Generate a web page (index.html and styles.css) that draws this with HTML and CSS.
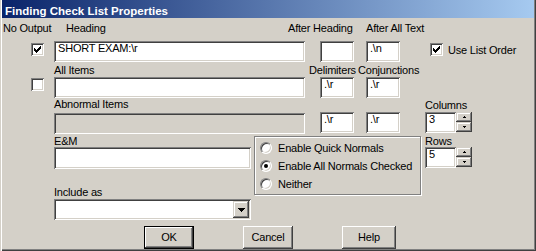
FILE: index.html
```html
<!DOCTYPE html>
<html>
<head>
<meta charset="utf-8">
<title>Finding Check List Properties</title>
<link rel="stylesheet" href="styles.css">
</head>
<body>
<div class="window">
  <div class="titlebar">Finding Check List Properties</div>

  <div class="row r-hdr">
    <span class="lbl w-nooutput">No Output</span>
    <span class="lbl w-heading">Heading</span>
    <span class="lbl w-afterhead">After Heading</span>
    <span class="lbl">After All Text</span>
  </div>

  <div class="row r-heading">
    <span class="check chk-a"><svg width="7" height="7" viewBox="0 0 7 7" shape-rendering="crispEdges"><path d="M6 0h1v1h-1z M5 1h2v1h-2z M0 2h1v1h-1z M4 2h3v1h-3z M0 3h2v1h-2z M3 3h3v1h-3z M0 4h5v1h-5z M1 5h3v1h-3z M2 6h1v1h-1z" fill="#000"/></svg></span>
    <div class="edit e-main">SHORT EXAM:\r</div>
    <div class="edit e-delim"></div>
    <div class="edit e-conj">.\n</div>
    <div class="list-order">
      <span class="check"><svg width="7" height="7" viewBox="0 0 7 7" shape-rendering="crispEdges"><path d="M6 0h1v1h-1z M5 1h2v1h-2z M0 2h1v1h-1z M4 2h3v1h-3z M0 3h2v1h-2z M3 3h3v1h-3z M0 4h5v1h-5z M1 5h3v1h-3z M2 6h1v1h-1z" fill="#000"/></svg></span>
      <span class="lbl lo-text">Use List Order</span>
    </div>
  </div>

  <div class="row r-sub">
    <span class="lbl w-allitems">All Items</span>
    <span class="lbl w-delims">Delimiters</span>
    <span class="lbl">Conjunctions</span>
  </div>

  <div class="row">
    <span class="check chk-b"></span>
    <div class="edit e-main"></div>
    <div class="edit e-delim">.\r</div>
    <div class="edit e-conj">.\r</div>
  </div>

  <div class="row r-sub2">
    <span class="lbl w-abnormal">Abnormal Items</span>
    <span class="lbl lbl-columns">Columns</span>
  </div>

  <div class="row">
    <div class="edit disabled e-abn"></div>
    <div class="edit e-delim">.\r</div>
    <div class="edit e-conj">.\r</div>
    <div class="spin spin-columns">
      <div class="edit spin-edit">3</div>
      <div class="spin-btns">
        <span class="sbtn"><svg width="3" height="2" viewBox="0 0 3 2" shape-rendering="crispEdges"><path d="M1 0h1v1h1v1h-3v-1h1z" fill="#000"/></svg></span>
        <span class="sbtn"><svg width="3" height="2" viewBox="0 0 3 2" shape-rendering="crispEdges"><path d="M0 0h3v1h-1v1h-1v-1h-1z" fill="#000"/></svg></span>
      </div>
    </div>
  </div>

  <div class="lower">
    <div class="left-col">
      <span class="lbl tight">E&amp;M</span>
      <div class="edit e-em"></div>
      <span class="lbl tight include">Include as</span>
      <div class="edit combo">
        <span class="combo-btn"><svg width="7" height="4" viewBox="0 0 7 4" shape-rendering="crispEdges"><path d="M0 0h7v1h-1v1h-1v1h-1v1h-1v-1h-1v-1h-1v-1h-1z" fill="#000"/></svg></span>
      </div>
    </div>

    <div class="radio-group">
      <div class="radio-item"><span class="radio"></span><span>Enable Quick Normals</span></div>
      <div class="radio-item"><span class="radio"><span class="dot"></span></span><span>Enable All Normals Checked</span></div>
      <div class="radio-item"><span class="radio"></span><span>Neither</span></div>
    </div>

    <div class="right-col">
      <span class="lbl tight">Rows</span>
      <div class="spin">
        <div class="edit spin-edit">5</div>
        <div class="spin-btns">
          <span class="sbtn"><svg width="3" height="2" viewBox="0 0 3 2" shape-rendering="crispEdges"><path d="M1 0h1v1h1v1h-3v-1h1z" fill="#000"/></svg></span>
          <span class="sbtn"><svg width="3" height="2" viewBox="0 0 3 2" shape-rendering="crispEdges"><path d="M0 0h3v1h-1v1h-1v-1h-1z" fill="#000"/></svg></span>
        </div>
      </div>
    </div>
  </div>

  <div class="buttons">
    <div class="btn btn-ok">OK</div>
    <div class="btn btn-cancel">Cancel</div>
    <div class="btn btn-help">Help</div>
  </div>
</div>
</body>
</html>
```
FILE: styles.css
```css
* { box-sizing: border-box; }

body {
  margin: 0;
  background: #d4d0c8;
}

.window {
  width: 536px;
  height: 251px;
  overflow: hidden;
  background: #d4d0c8;
  font-family: "Liberation Sans", Arial, sans-serif;
  font-size: 11px;
  letter-spacing: -0.2px;
  color: #000;
  box-shadow: inset 1px 0 #d4d0c8, inset 2px 0 #fff, inset -1px -1px #404040, inset -2px -2px #808080;
}

.titlebar {
  margin: 0 2px;
  height: 18px;
  padding: 5px 0 0 3px;
  background: linear-gradient(to right, #0a246a, #a6caf0);
  color: #fff;
  font-weight: bold;
  font-size: 11.5px;
  letter-spacing: 0;
  line-height: 13px;
  white-space: nowrap;
}

.row {
  display: flex;
  align-items: flex-start;
}

.lbl {
  line-height: 13px;
  white-space: nowrap;
  flex: none;
}

.tight { line-height: 12px; }

/* header labels */
.r-hdr { margin-top: 4px; padding-left: 3px; }
.w-nooutput { width: 63px; }
.w-heading { width: 222px; }
.w-afterhead { width: 78px; }

.r-heading { margin-top: 6px; }

.r-sub { margin-top: 2px; padding-left: 54px; }
.w-allitems { width: 255px; }
.w-delims { width: 49px; }

.r-sub2 { padding-left: 54px; }
.w-abnormal { width: 371px; }
.lbl-columns { margin-top: 1px; }

/* sunken edit field */
.edit {
  flex: none;
  background: #fff;
  padding: 1px 3px 0 4px;
  line-height: 13px;
  white-space: nowrap;
  overflow: hidden;
  box-shadow: inset 1px 1px #808080, inset -1px -1px #fff, inset 2px 2px #404040, inset -2px -2px #d4d0c8;
}
.edit.disabled { background: #d4d0c8; }

.e-main { margin-left: 10px; width: 251px; height: 21px; }
.e-delim { margin-left: 15px; width: 34px; height: 21px; }
.e-conj { margin-left: 12px; width: 34px; height: 21px; }
.e-abn { margin-left: 54px; margin-top: 1px; width: 251px; height: 21px; }

/* checkboxes */
.check {
  flex: none;
  width: 13px;
  height: 13px;
  background: #fff;
  display: flex;
  align-items: center;
  justify-content: center;
  box-shadow: inset 1px 1px #808080, inset -1px -1px #fff, inset 2px 2px #404040, inset -2px -2px #d4d0c8;
}
.check svg { display: block; }
.chk-a { margin-left: 31px; margin-top: 2px; }
.chk-b { margin-left: 31px; margin-top: 1px; }

.list-order {
  margin-left: 30px;
  margin-top: 2px;
  display: flex;
  align-items: flex-start;
}
.lo-text { margin-left: 5px; margin-top: 1px; }

/* spinners */
.spin { display: flex; flex: none; }
.spin-columns { margin-left: 25px; }
.spin-edit { width: 31px; height: 21px; }
.spin-btns {
  display: flex;
  flex-direction: column;
  width: 16px;
}
.sbtn {
  height: 10px;
  display: flex;
  align-items: center;
  justify-content: center;
  background: #d4d0c8;
  box-shadow: inset -1px -1px #404040, inset 1px 1px #d4d0c8, inset -2px -2px #808080, inset 2px 2px #fff;
}
.sbtn svg { display: block; }

/* lower section */
.lower {
  display: flex;
  align-items: flex-start;
  margin-top: 1px;
}

.left-col {
  margin-left: 54px;
  width: 197px;
  display: flex;
  flex-direction: column;
  flex: none;
}
.e-em { height: 22px; }
.include { margin-top: 17px; }

.combo {
  margin-top: 1px;
  height: 21px;
  padding: 2px;
  display: flex;
  justify-content: flex-end;
}
.combo-btn {
  width: 16px;
  height: 17px;
  display: flex;
  align-items: center;
  justify-content: center;
  background: #d4d0c8;
  box-shadow: inset -1px -1px #404040, inset 1px 1px #d4d0c8, inset -2px -2px #808080, inset 2px 2px #fff;
}
.combo-btn svg { display: block; }

.radio-group {
  flex: none;
  margin-left: 3px;
  margin-top: 1px;
  width: 167px;
  height: 59px;
  border: 1px solid #808080;
  box-shadow: inset 1px 1px #fff, 1px 1px #fff;
  padding: 2px 0 0 5px;
}
.radio-item {
  display: flex;
  align-items: center;
  gap: 6px;
  height: 18px;
  line-height: 13px;
  white-space: nowrap;
}
.radio {
  flex: none;
  width: 12px;
  height: 12px;
  border-radius: 50%;
  background: #fff;
  border: 1px solid;
  border-color: #808080 #fff #fff #808080;
  box-shadow: inset 1px 1px #404040, inset -1px -1px #d4d0c8;
  display: flex;
  align-items: center;
  justify-content: center;
}
.dot {
  width: 4px;
  height: 4px;
  border-radius: 50%;
  background: #000;
}

.right-col {
  margin-left: 4px;
  display: flex;
  flex-direction: column;
  flex: none;
}

/* buttons */
.buttons {
  display: flex;
  margin-top: 6px;
}
.btn {
  flex: none;
  width: 50px;
  height: 23px;
  display: flex;
  align-items: center;
  justify-content: center;
  line-height: 13px;
  padding-bottom: 1px;
  background: #d4d0c8;
  box-shadow: inset -1px -1px #404040, inset 1px 1px #fff, inset -2px -2px #808080, inset 2px 2px #d4d0c8;
}
.btn-ok { margin-left: 144px; border: 1px solid #000; }
.btn-cancel { margin-left: 49px; }
.btn-help { margin-left: 49px; width: 54px; }
```
